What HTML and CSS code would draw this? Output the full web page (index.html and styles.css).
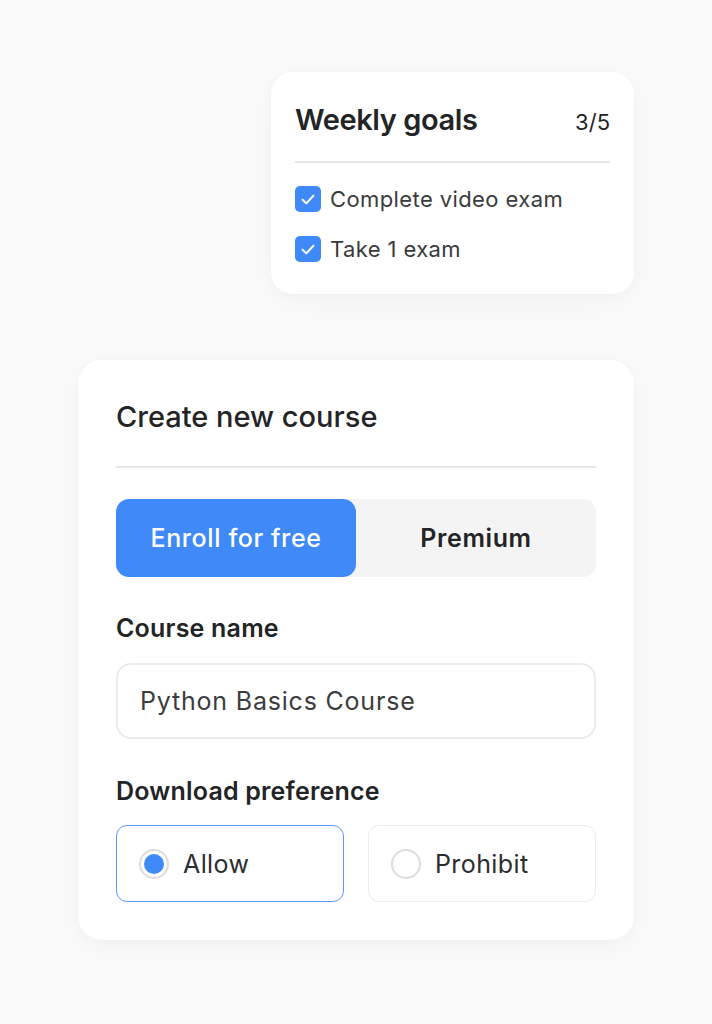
FILE: index.html
```html
<!DOCTYPE html>
<html lang="en">
<head>
<meta charset="utf-8">
<title>Course</title>
<link rel="stylesheet" href="styles.css">
</head>
<body>
<div class="page">
  <section class="card goals">
    <div class="goals-head">
      <h2 class="goals-title">Weekly goals</h2>
      <span class="goals-count">3/5</span>
    </div>
    <div class="divider"></div>
    <ul class="goal-list">
      <li class="goal">
        <span class="check"><svg viewBox="0 0 26 26" width="26" height="26"><path d="M7.6 13.7l3.7 3.7 7.1-7.6" fill="none" stroke="#fff" stroke-width="2" stroke-linecap="round" stroke-linejoin="round"/></svg></span>
        <span class="goal-text">Complete video exam</span>
      </li>
      <li class="goal">
        <span class="check"><svg viewBox="0 0 26 26" width="26" height="26"><path d="M7.6 13.7l3.7 3.7 7.1-7.6" fill="none" stroke="#fff" stroke-width="2" stroke-linecap="round" stroke-linejoin="round"/></svg></span>
        <span class="goal-text">Take 1 exam</span>
      </li>
    </ul>
  </section>

  <section class="card course">
    <h2 class="course-title">Create new course</h2>
    <div class="divider course-divider"></div>
    <div class="toggle">
      <div class="toggle-opt active">Enroll for free</div>
      <div class="toggle-opt">Premium</div>
    </div>
    <div class="label">Course name</div>
    <div class="input">Python Basics Course</div>
    <div class="label label-2">Download preference</div>
    <div class="radios">
      <div class="radio-opt selected"><span class="radio"><span class="dot"></span></span><span class="radio-text">Allow</span></div>
      <div class="radio-opt"><span class="radio"></span><span class="radio-text">Prohibit</span></div>
    </div>
  </section>
</div>
</body>
</html>
```

FILE: styles.css
```css
* { box-sizing: border-box; }
html, body { margin: 0; padding: 0; }
body {
  background: #fafafa;
  font-family: Inter, "Noto Sans", "Liberation Sans", sans-serif;
  color: #232426;
  width: 712px;
  height: 1024px;
  overflow: hidden;
}
.page {
  display: flex;
  flex-direction: column;
  padding-top: 72px;
}
.card {
  background: #fff;
  border-radius: 22px;
  box-shadow: 0 8px 40px rgba(0, 0, 0, 0.035), 0 2px 8px rgba(0, 0, 0, 0.02);
}
.goals {
  margin-left: 271px;
  width: 363px;
  padding: 31px 24px 32px 24px;
}
.goals-head {
  display: flex;
  justify-content: space-between;
  align-items: baseline;
}
.goals-title {
  margin: 0;
  font-size: 29px;
  line-height: 34px;
  font-weight: 600;
  letter-spacing: -0.4px;
  color: #232426;
}
.goals-count {
  font-size: 22px;
  font-weight: 400;
  color: #232426;
}
.divider {
  height: 2px;
  background: #e6e6e8;
  margin-top: 24px;
}
.goal-list {
  list-style: none;
  margin: 23px 0 0 0;
  padding: 0;
  display: flex;
  flex-direction: column;
  gap: 24px;
}
.goal {
  display: flex;
  align-items: center;
  gap: 9px;
  height: 26px;
}
.check {
  width: 26px;
  height: 26px;
  border-radius: 5px;
  background: #3f8af8;
  display: flex;
}
.goal-text {
  font-size: 22px;
  letter-spacing: 0.4px;
  color: #3a3b3d;
}
.course {
  margin-left: 78px;
  margin-top: 66px;
  width: 556px;
  border-radius: 24px;
  padding: 40px 38px 38px 38px;
}
.course-title {
  margin: 0;
  font-size: 29px;
  line-height: 34px;
  font-weight: 500;
  letter-spacing: 0;
  color: #232426;
}
.course-divider {
  margin-top: 32px;
}
.toggle {
  margin-top: 31px;
  display: grid;
  grid-template-columns: 240px 1fr;
  height: 78px;
  background: #f4f4f4;
  border-radius: 13px;
}
.toggle-opt {
  display: flex;
  align-items: center;
  justify-content: center;
  font-size: 25px;
  letter-spacing: 0.6px;
  font-weight: 600;
  color: #232426;
}
.toggle-opt.active {
  background: #3f8af8;
  color: #fff;
  font-weight: 500;
  border-radius: 13px;
}
.label {
  margin-top: 36px;
  font-size: 25px;
  line-height: 30px;
  font-weight: 600;
  letter-spacing: 0.2px;
  color: #232426;
}
.label-2 {
  margin-top: 37px;
}
.input {
  margin-top: 20px;
  height: 76px;
  border: 2px solid #ebebeb;
  border-radius: 15px;
  display: flex;
  align-items: center;
  padding-left: 22px;
  font-size: 25px;
  letter-spacing: 0.8px;
  color: #3c3d40;
}
.radios {
  margin-top: 19px;
  display: grid;
  grid-template-columns: 1fr 1fr;
  gap: 24px;
}
.radio-opt {
  height: 77px;
  border: 1.5px solid #ececec;
  border-radius: 11px;
  display: flex;
  align-items: center;
  padding-left: 22px;
  gap: 14px;
}
.radio-opt.selected {
  border-color: #5b9af8;
}
.radio {
  width: 30px;
  height: 30px;
  border-radius: 50%;
  border: 2px solid #dcdcdc;
  display: flex;
  align-items: center;
  justify-content: center;
}
.dot {
  width: 20px;
  height: 20px;
  border-radius: 50%;
  background: #3f8af8;
}
.radio-text {
  font-size: 25px;
  letter-spacing: 0.4px;
  color: #2c2d30;
}
```
